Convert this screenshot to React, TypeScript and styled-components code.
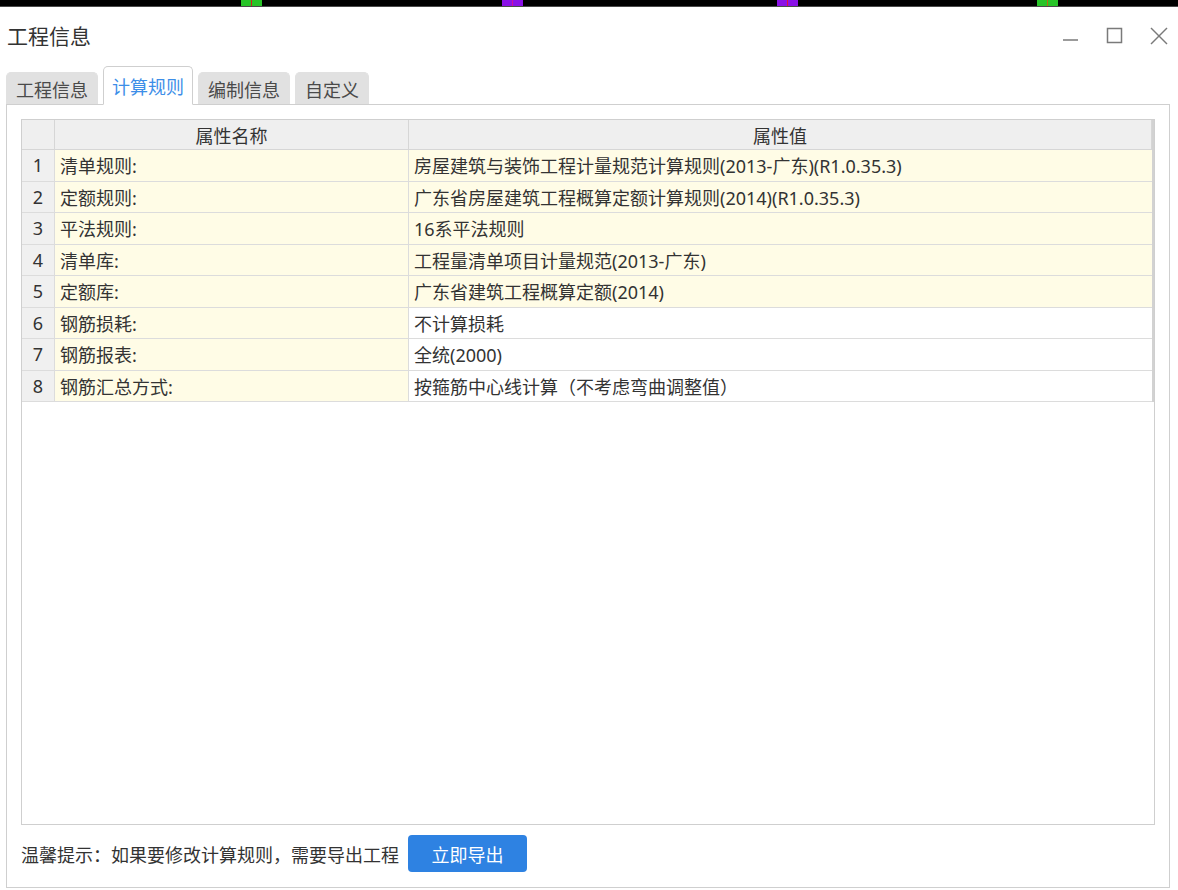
import React from 'react';
import styled, { createGlobalStyle } from 'styled-components';

const GlobalStyle = createGlobalStyle`
    body {
        margin: 0;
        background: #ffffff;
        font-family: "Noto Sans", "Noto Sans CJK SC", sans-serif;
        color: #333333;
    }
`;

const Strip = styled.div`
    position: relative;
    height: 6px;
    background: #000000;
    border-bottom: 1px solid #4a4a4a;
`;

const Marker = styled.span<{ $left: number; $color: string; $line: string }>`
    position: absolute;
    top: 0;
    left: ${p => p.$left}px;
    width: 21px;
    height: 6px;
    background: ${p => p.$color};

    &::after {
        content: '';
        position: absolute;
        left: 10px;
        top: 0;
        width: 1px;
        height: 6px;
        background: ${p => p.$line};
    }
`;

const TitleBar = styled.div`
    display: flex;
    align-items: center;
    justify-content: space-between;
    box-sizing: border-box;
    height: 58px;
    padding: 0 10px 3px 7px;
`;

const Title = styled.h1`
    margin: 0;
    font-size: 21px;
    font-weight: 400;
    color: #333333;
`;

const Controls = styled.div`
    display: flex;
    align-items: center;
    gap: 26px;
    padding-top: 2px;
`;

const ControlIcon = styled.svg`
    width: 18px;
    height: 18px;
    stroke: #7a7a7a;
    fill: none;
    stroke-width: 1.5;
`;

const TabRow = styled.div`
    display: flex;
    align-items: flex-end;
    gap: 5px;
    height: 39px;
    padding-left: 6px;
`;

const Tab = styled.div<{ $active?: boolean }>`
    display: flex;
    align-items: center;
    justify-content: center;
    box-sizing: border-box;
    padding: 0 ${p => (p.$active ? 8 : 9)}px;
    height: ${p => (p.$active ? 39 : 32)}px;
    margin-bottom: ${p => (p.$active ? -1 : 0)}px;
    font-size: 18px;
    color: ${p => (p.$active ? '#3d8ee8' : '#4a4a4a')};
    background: ${p => (p.$active ? '#ffffff' : '#e1e1e1')};
    border: 1px solid ${p => (p.$active ? '#cfcfcf' : '#e1e1e1')};
    border-bottom: ${p => (p.$active ? '1px solid #ffffff' : 'none')};
    border-radius: 5px 5px 0 0;
    position: relative;
    z-index: ${p => (p.$active ? 1 : 0)};
`;

const Panel = styled.div`
    display: flex;
    flex-direction: column;
    box-sizing: border-box;
    height: 784px;
    margin: 0 8px 0 6px;
    padding: 14px 14px 15px;
    border: 1px solid #cfcfcf;
`;

const TableBox = styled.div`
    flex: 1;
    border: 1px solid #cfcfcf;
    background: #ffffff;
`;

const Grid = styled.div`
    display: grid;
    grid-template-columns: 33px 354px 1fr;
    border-right: 2px solid #d2d2d2;
`;

const HeadCell = styled.div`
    height: 29px;
    display: flex;
    align-items: center;
    justify-content: center;
    font-size: 18px;
    background: #efefef;
    border-right: 1px solid #d6d6d6;
    border-bottom: 1px solid #d6d6d6;
    &:last-child {
        border-right: none;
    }
`;

const Cell = styled.div<{ $kind: 'index' | 'yellow' | 'white' }>`
    height: 30.5px;
    display: flex;
    align-items: center;
    justify-content: ${p => (p.$kind === 'index' ? 'center' : 'flex-start')};
    padding-left: ${p => (p.$kind === 'index' ? 0 : 5)}px;
    font-size: 18px;
    white-space: nowrap;
    background: ${p => (p.$kind === 'index' ? '#f0f0f0' : p.$kind === 'yellow' ? '#fffce6' : '#ffffff')};
    border-bottom: 1px solid #dcdcdc;
    border-right: 1px solid #dcdcdc;
    &:nth-child(3n) {
        border-right: none;
    }
`;

const Footer = styled.div`
    display: flex;
    align-items: center;
    gap: 9px;
    margin-top: 10px;
`;

const Hint = styled.span`
    font-size: 18px;
    color: #333333;
`;

const ExportButton = styled.button`
    width: 119px;
    height: 37px;
    border: none;
    border-radius: 4px;
    background: #2e82e2;
    color: #ffffff;
    font-family: inherit;
    font-size: 18px;
`;

const rows = [
    { name: '清单规则:', value: '房屋建筑与装饰工程计量规范计算规则(2013-广东)(R1.0.35.3)', yellow: true },
    { name: '定额规则:', value: '广东省房屋建筑工程概算定额计算规则(2014)(R1.0.35.3)', yellow: true },
    { name: '平法规则:', value: '16系平法规则', yellow: true },
    { name: '清单库:', value: '工程量清单项目计量规范(2013-广东)', yellow: true },
    { name: '定额库:', value: '广东省建筑工程概算定额(2014)', yellow: true },
    { name: '钢筋损耗:', value: '不计算损耗', yellow: false },
    { name: '钢筋报表:', value: '全统(2000)', yellow: false },
    { name: '钢筋汇总方式:', value: '按箍筋中心线计算（不考虑弯曲调整值）', yellow: false },
];

const tabs = ['工程信息', '计算规则', '编制信息', '自定义'];

export default function App() {
    return (
        <>
            <GlobalStyle />
            <Strip>
                <Marker $left={241} $color="#27c427" $line="#d02020" />
                <Marker $left={502} $color="#8a10e6" $line="#d0109a" />
                <Marker $left={777} $color="#8a10e6" $line="#e01040" />
                <Marker $left={1037} $color="#27c427" $line="#b07010" />
            </Strip>
            <TitleBar>
                <Title>工程信息</Title>
                <Controls>
                    <ControlIcon viewBox="0 0 18 18">
                        <line x1="1" y1="13" x2="16" y2="13" />
                    </ControlIcon>
                    <ControlIcon viewBox="0 0 18 18">
                        <rect x="1.5" y="1.5" width="14" height="14" />
                    </ControlIcon>
                    <ControlIcon viewBox="0 0 18 18">
                        <line x1="1" y1="1" x2="17" y2="17" />
                        <line x1="17" y1="1" x2="1" y2="17" />
                    </ControlIcon>
                </Controls>
            </TitleBar>
            <TabRow>
                {tabs.map((t, i) => (
                    <Tab key={t} $active={i === 1}>{t}</Tab>
                ))}
            </TabRow>
            <Panel>
                <TableBox>
                    <Grid>
                        <HeadCell />
                        <HeadCell>属性名称</HeadCell>
                        <HeadCell>属性值</HeadCell>
                        {rows.map((r, i) => (
                            <React.Fragment key={r.name}>
                                <Cell $kind="index">{i + 1}</Cell>
                                <Cell $kind="yellow">{r.name}</Cell>
                                <Cell $kind={r.yellow ? 'yellow' : 'white'}>{r.value}</Cell>
                            </React.Fragment>
                        ))}
                    </Grid>
                </TableBox>
                <Footer>
                    <Hint>温馨提示：如果要修改计算规则，需要导出工程</Hint>
                    <ExportButton>立即导出</ExportButton>
                </Footer>
            </Panel>
        </>
    );
}
